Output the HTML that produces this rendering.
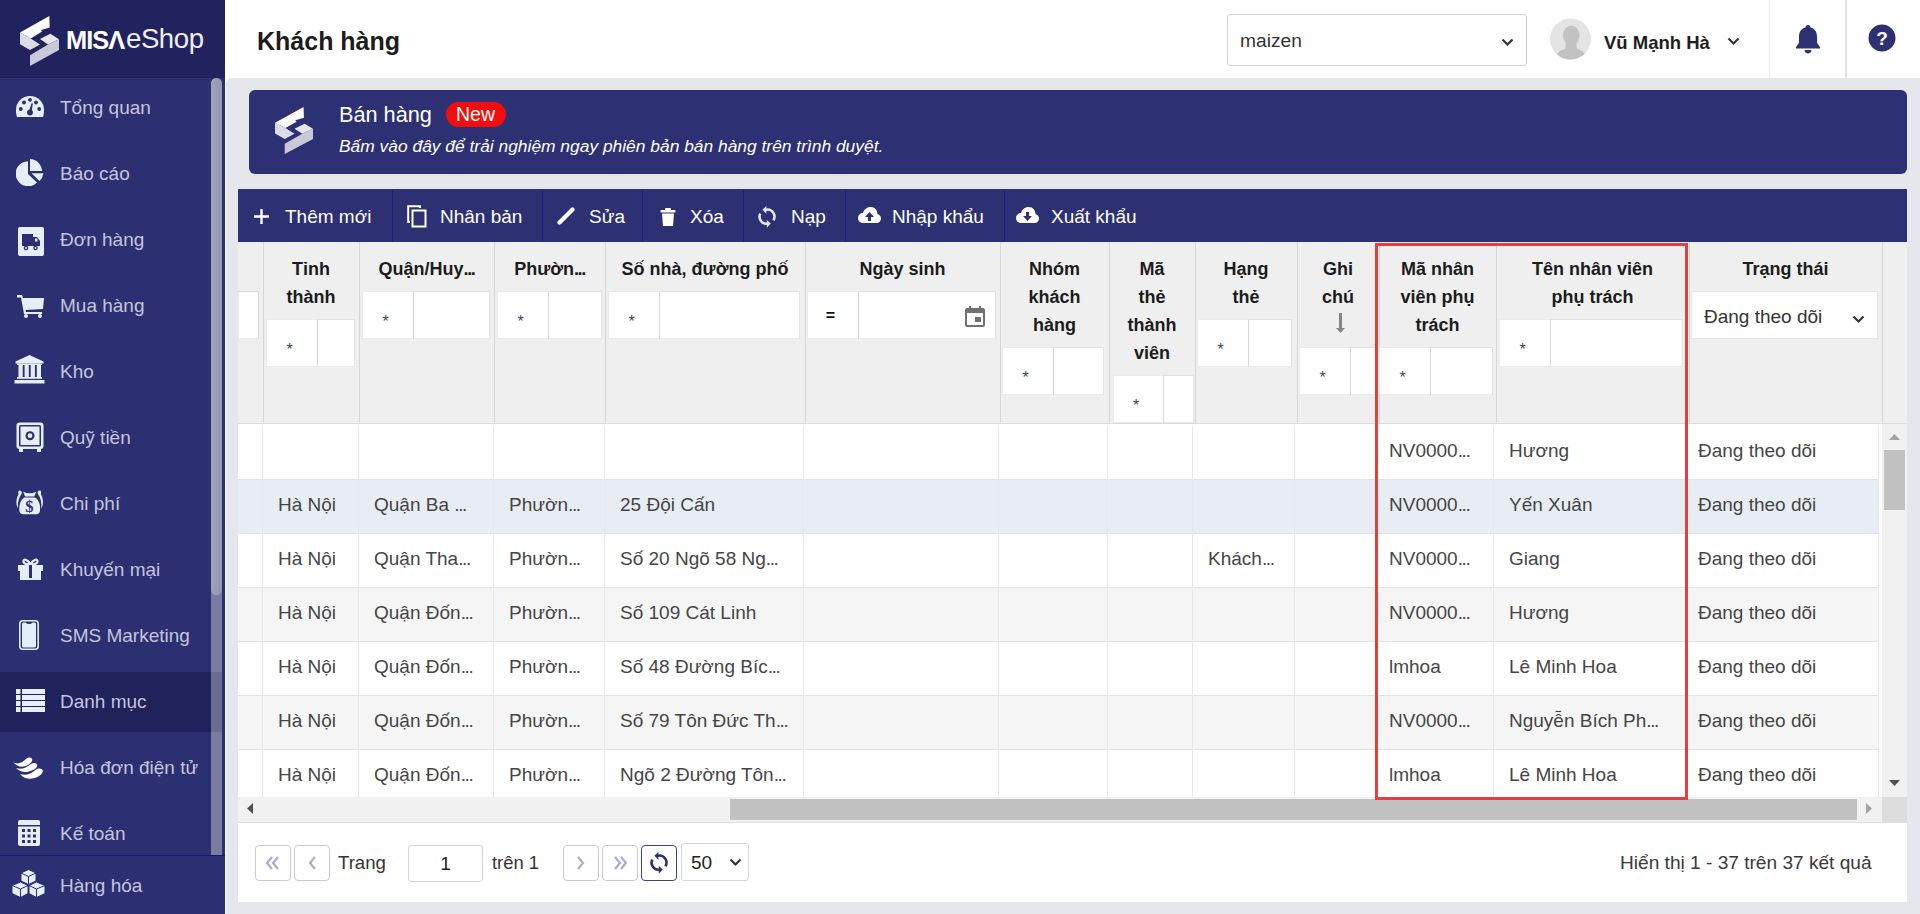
<!DOCTYPE html>
<html><head><meta charset="utf-8">
<style>
*{box-sizing:border-box;margin:0;padding:0}
html,body{width:1920px;height:914px;overflow:hidden;background:#e6e7ec;font-family:"Liberation Sans",sans-serif;position:relative}
.a{position:absolute}
.tx{position:absolute;white-space:nowrap;line-height:20px;height:20px}
#side{left:0;top:0;width:225px;height:914px;background:#2c2f72}
#logo{left:0;top:0;width:225px;height:78px;background:#21235e}
.mt{position:absolute;left:60px;color:#c4c5dd;font-size:19px;white-space:nowrap;line-height:20px;height:20px}
.ic{position:absolute}
#header{left:225px;top:0;width:1695px;height:78px;background:#fff}
#banner{left:249px;top:90px;width:1658px;height:84px;background:#2d3072;border-radius:6px}
#toolbar{left:238px;top:189px;width:1669px;height:53px;background:#2d3072}
.sep{position:absolute;top:190px;width:1px;height:52px;background:#1f1b8c}
.tbt{position:absolute;color:#fff;font-size:19px;white-space:nowrap;line-height:20px;top:207px}
.hd{position:absolute;text-align:center;font-weight:bold;font-size:18px;line-height:28px;height:28px;color:#1c1c1c;white-space:nowrap}
.op{position:absolute;text-align:center;font-size:16px;line-height:16px;color:#3c4260}
.bd{position:absolute;white-space:nowrap;font-size:19px;line-height:20px;height:20px;color:#454545}
.el{letter-spacing:-1.4px}
</style></head><body>
<!-- SIDEBAR -->
<div id="side" class="a"></div>
<div id="logo" class="a"></div>
<svg class="a" style="left:20px;top:16px" width="39" height="50" viewBox="80 68 585 782" preserveAspectRatio="none">
 <polygon fill="#ffffff" points="80,328 520,68 525,248 392,290 412,312 240,418"/>
 <polygon fill="#dcdce8" points="80,328 240,418 380,512 230,600 80,510"/>
 <polygon fill="#e6e6ef" points="380,428 535,345 665,430 500,512"/>
 <polygon fill="#c9c9da" points="500,512 665,430 665,600 230,850 230,680"/>
</svg>
<div class="tx" style="left:66px;top:29px;font-size:25.4px;line-height:22px;height:22px;font-weight:bold;color:#fff;letter-spacing:-1px">MISΛ</div>
<div class="tx" style="left:126px;top:26px;font-size:27.6px;line-height:26px;height:26px;color:#eeeef5;letter-spacing:-0.45px">eShop</div>

<!-- sidebar scrollbar -->
<div class="a" style="left:211px;top:78px;width:11px;height:778px;background:#7a7ba3;border-radius:6px 6px 0 0"></div>
<div class="a" style="left:211px;top:78px;width:11px;height:517px;background:linear-gradient(90deg,#a0a1ba,#9495ae);border-radius:6px"></div>
<!-- active band -->
<div class="a" style="left:0;top:672px;width:211px;height:60px;background:#1f225b"></div>
<div class="a" style="left:211px;top:672px;width:11px;height:60px;background:#6b6c92"></div>
<!-- separator -->
<div class="a" style="left:0;top:855px;width:225px;height:1px;background:#17137a"></div>

<!-- menu icons -->
<!-- gauge -->
<svg class="ic" style="left:16px;top:96px" width="28" height="22" viewBox="0 0 28 22">
 <path fill="#e6eefa" d="M1,21 C0,18 0,16 0,14 A14,14 0 0 1 28,14 C28,16 28,18 27,21 Z"/>
 <g fill="#2c2f72"><circle cx="4.8" cy="13" r="1.9"/><circle cx="8" cy="6.5" r="1.9"/><circle cx="14" cy="3.8" r="1.9"/><circle cx="20" cy="6.5" r="1.9"/><circle cx="23.2" cy="13" r="1.9"/>
 <circle cx="14" cy="16.5" r="2.9"/><path d="M12.6,16 L15.6,7.2 L16.9,7.6 L15.4,16.8Z"/></g>
</svg>
<!-- pie -->
<svg class="ic" style="left:16px;top:159px" width="28" height="27" viewBox="0 0 28 27">
 <path fill="#e6eefa" d="M12,2.2 L12,15 L21,23.5 A12.5,12.5 0 1 1 12,2.2Z"/>
 <path fill="#e6eefa" d="M14,0 A12.5,12.5 0 0 1 26,12 L14,12Z"/>
 <path fill="#e6eefa" d="M15.5,14.2 L27.4,14.2 A12.5,12.5 0 0 1 23.5,22Z"/>
</svg>
<!-- truck box -->
<svg class="ic" style="left:18px;top:227px" width="26" height="29" viewBox="0 0 26 29">
 <rect x="0" y="0" width="26" height="29" rx="2" fill="#e6eefa"/>
 <g fill="#2c2f72"><rect x="4" y="7" width="11" height="12"/><path d="M15,10 L19,10 L22,14 L22,19 L15,19Z"/><circle cx="8" cy="21" r="2.3"/><circle cx="17.5" cy="21" r="2.3"/></g>
 <g fill="#e6eefa"><circle cx="8" cy="21" r="1"/><circle cx="17.5" cy="21" r="1"/><rect x="17" y="11.5" width="2.5" height="3"/></g>
</svg>
<!-- cart -->
<svg class="ic" style="left:17px;top:295px" width="27" height="23" viewBox="0 0 27 23">
 <path fill="#e6eefa" d="M0,0 L5,0 L6,3 L27,3 L26,14 L8.5,15 L9,17 L25,17 L25,19 L7,19 L4,2.5 L0,2.5Z"/>
 <circle cx="9" cy="21" r="2" fill="#e6eefa"/><circle cx="23" cy="21" r="2" fill="#e6eefa"/>
</svg>
<!-- bank -->
<svg class="ic" style="left:14px;top:355px" width="31" height="29" viewBox="0 0 31 29">
 <path fill="#e6eefa" d="M15.5,0 L29.5,6.5 L29.5,8.5 L1.5,8.5 L1.5,6.5Z"/>
 <rect x="3" y="8.5" width="25" height="1.5" fill="#e6eefa"/>
 <rect x="4.5" y="10" width="4.2" height="12" fill="#e6eefa"/><rect x="10.6" y="10" width="4.2" height="12" fill="#e6eefa"/><rect x="16.7" y="10" width="4.2" height="12" fill="#e6eefa"/><rect x="22.8" y="10" width="4.2" height="12" fill="#e6eefa"/>
 <rect x="3" y="22" width="25" height="1.8" fill="#e6eefa"/><rect x="0.5" y="25" width="30" height="3.5" fill="#e6eefa"/>
</svg>
<!-- safe -->
<svg class="ic" style="left:16px;top:422px" width="28" height="30" viewBox="0 0 28 30">
 <rect x="0.5" y="0.5" width="27" height="26.5" rx="3" fill="#e6eefa"/>
 <rect x="3" y="3" width="22" height="21.5" rx="1.5" fill="#2c2f72"/>
 <rect x="4.5" y="4.5" width="19" height="18.5" fill="#e6eefa"/>
 <circle cx="14" cy="13.7" r="4.5" fill="#2c2f72"/><circle cx="14" cy="13.7" r="2.4" fill="#e6eefa"/>
 <rect x="3" y="27" width="4" height="3" fill="#e6eefa"/><rect x="21" y="27" width="4" height="3" fill="#e6eefa"/>
</svg>
<!-- money bag -->
<svg class="ic" style="left:16px;top:490px" width="28" height="25" viewBox="0 0 28 25">
 <g fill="#e6eefa">
 <path d="M8.4,7.6 C3.5,10.5 2.8,17.5 3.6,21.5 Q4.2,24.3 7.2,24.3 L20.2,24.3 Q23.2,24.3 23.8,21.5 C24.6,17.5 23.9,10.5 19,7.6Z"/>
 <path d="M7.2,1.8 Q13.7,4.8 20.2,1.8 L18.3,6.6 L9.1,6.6Z"/>
 <path d="M3.6,0.6 C5.4,0.6 6.3,2.3 5.6,3.8 C2.6,8 1.6,13 2,18.5 C-0.2,14.5 -0.2,8.5 2.6,4.2 C1.8,2.6 2.3,0.6 3.6,0.6Z"/>
 <path transform="translate(27.4,0) scale(-1,1)" d="M3.6,0.6 C5.4,0.6 6.3,2.3 5.6,3.8 C2.6,8 1.6,13 2,18.5 C-0.2,14.5 -0.2,8.5 2.6,4.2 C1.8,2.6 2.3,0.6 3.6,0.6Z"/>
 </g>
 <text x="13.4" y="21.8" font-family="Liberation Serif" font-size="16.5" font-weight="bold" text-anchor="middle" fill="#2c2f72">$</text>
</svg>
<!-- gift -->
<svg class="ic" style="left:18px;top:558px" width="25" height="22" viewBox="0 0 25 22">
 <path fill="none" stroke="#e6eefa" stroke-width="2.2" d="M12.5,6.5 C10,1.5 6,0.5 5.5,3 C5,5.5 9,6.5 12.5,6.5 C16,6.5 20,5.5 19.5,3 C19,0.5 15,1.5 12.5,6.5"/>
 <rect x="0" y="7" width="25" height="6" fill="#e6eefa"/><rect x="2" y="13" width="21" height="9" fill="#e6eefa"/>
 <rect x="11" y="7" width="3" height="13" fill="#2c2f72"/>
</svg>
<!-- phone -->
<svg class="ic" style="left:19px;top:620px" width="20" height="30" viewBox="0 0 20 30">
 <rect x="0.8" y="0.8" width="18.4" height="28.4" rx="3" fill="none" stroke="#e6eefa" stroke-width="1.6"/>
 <path d="M3,4 Q3,2.5 4.5,2.5 L6.5,2.5 Q7.5,4 10,4 Q12.5,4 13.5,2.5 L15.5,2.5 Q17,2.5 17,4 L17,26 Q17,27.5 15.5,27.5 L4.5,27.5 Q3,27.5 3,26Z" fill="#e3eefb"/>
</svg>
<!-- list -->
<svg class="ic" style="left:16px;top:689px" width="29" height="23" viewBox="0 0 29 23">
 <g fill="#e6eefa"><rect x="0" y="0" width="4.5" height="5"/><rect x="6" y="0" width="23" height="5"/>
 <rect x="0" y="6" width="4.5" height="5"/><rect x="6" y="6" width="23" height="5"/>
 <rect x="0" y="12" width="4.5" height="5"/><rect x="6" y="12" width="23" height="5"/>
 <rect x="0" y="18" width="4.5" height="5"/><rect x="6" y="18" width="23" height="5"/></g>
</svg>
<!-- swoosh -->
<svg class="ic" style="left:13px;top:757px" width="31" height="24" viewBox="0 0 31 24">
 <g fill="#ffffff">
 <path d="M0,5 C4,8 9,6 13,2 C15,0 18,0 19,2 C20,4 18,6 15,8 C10,11 4,10 0,5Z"/>
 <path d="M3,11 C8,13 13,11 18,7 C20,5.5 23,5.5 24,7.5 C25,9.5 23,11.5 20,13 C14,16 8,16 3,11Z"/>
 <path d="M7,17 C12,19 18,17 23,12.5 C25,11 28,11 29.5,13 C30.5,15 29,17 26,19 C20,23 12,23 7,17Z"/>
 </g>
</svg>
<!-- calculator -->
<svg class="ic" style="left:18px;top:820px" width="22" height="26" viewBox="0 0 22 26">
 <rect x="0" y="0" width="22" height="26" rx="2" fill="#e6eefa"/>
 <rect x="0" y="5" width="22" height="1.5" fill="#2c2f72"/>
 <g fill="#2c2f72"><rect x="4" y="9" width="3" height="3"/><rect x="9.5" y="9" width="3" height="3"/><rect x="15" y="9" width="3" height="3"/>
 <rect x="4" y="14.5" width="3" height="3"/><rect x="9.5" y="14.5" width="3" height="3"/><rect x="15" y="14.5" width="3" height="3"/>
 <rect x="4" y="20" width="3" height="3"/><rect x="9.5" y="20" width="3" height="3"/><rect x="15" y="20" width="3" height="3"/></g>
</svg>
<!-- cubes -->
<svg class="ic" style="left:11px;top:869px" width="35" height="29" viewBox="0 0 35 29">
 <g fill="#e6eefa" stroke="#2c2f72" stroke-width="1">
 <path d="M17.5,0.5 L25,4 L25,12 L17.5,15.5 L10,12 L10,4Z"/>
 <path d="M9.5,13 L17,16.5 L17,24.5 L9.5,28.5 L1,24.5 L1,16.5Z"/>
 <path d="M25.5,13 L34,16.5 L34,24.5 L25.5,28.5 L18,24.5 L18,16.5Z"/>
 </g>
 <g fill="none" stroke="#2c2f72" stroke-width="1"><path d="M10,4 L17.5,7.5 L25,4 M17.5,7.5 L17.5,15.5 M1,16.5 L9.5,20 L17,16.5 M9.5,20 L9.5,28.5 M18,16.5 L25.5,20 L34,16.5 M25.5,20 L25.5,28.5"/></g>
</svg>

<div class="mt" style="top:98px">Tổng quan</div>
<div class="mt" style="top:164px">Báo cáo</div>
<div class="mt" style="top:230px">Đơn hàng</div>
<div class="mt" style="top:296px">Mua hàng</div>
<div class="mt" style="top:362px">Kho</div>
<div class="mt" style="top:428px">Quỹ tiền</div>
<div class="mt" style="top:494px">Chi phí</div>
<div class="mt" style="top:560px">Khuyến mại</div>
<div class="mt" style="top:626px">SMS Marketing</div>
<div class="mt" style="top:692px">Danh mục</div>
<div class="mt" style="top:758px">Hóa đơn điện tử</div>
<div class="mt" style="top:824px">Kế toán</div>
<div class="mt" style="top:876px">Hàng hóa</div>

<!-- HEADER -->
<div id="header" class="a"></div>
<div class="a" style="left:225px;top:78px;width:8px;height:8px;background:#fff"></div>
<div class="a" style="left:226px;top:78px;width:16px;height:16px;background:#e6e7ec;border-radius:6px 0 0 0"></div>
<div class="a" style="left:225px;top:78px;width:1px;height:836px;background:#fff"></div>
<div class="tx" style="left:257px;top:26px;font-size:25px;line-height:30px;height:30px;font-weight:bold;color:#1c1c1c">Khách hàng</div>

<!-- BANNER -->
<div id="banner" class="a"></div>
<!-- TOOLBAR -->
<div id="toolbar" class="a"></div>

<!-- header right -->
<div class="a" style="left:1227px;top:14px;width:300px;height:52px;border:1px solid #d4d4d4;border-radius:3px;background:#fff"></div>
<div class="tx" style="left:1240px;top:31px;font-size:19.2px;color:#333">maizen</div>
<svg class="a" style="left:1501px;top:38px" width="13" height="9" viewBox="0 0 13 9"><path d="M1.5,1.5 L6.5,6.5 L11.5,1.5" fill="none" stroke="#333" stroke-width="2.2"/></svg>
<svg class="a" style="left:1549px;top:18px" width="42" height="42" viewBox="0 0 42 42">
 <circle cx="21.5" cy="21" r="20.5" fill="#e4e4e4"/>
 <clipPath id="avc"><circle cx="21.5" cy="21" r="20.5"/></clipPath>
 <g clip-path="url(#avc)" fill="#c2c2c2"><ellipse cx="22.3" cy="17.5" rx="8.3" ry="10"/><path d="M17,24 L27,24 L28,31 C33,32 37,35 38,42 L6,42 C7,35 11,32 16,31Z"/></g>
</svg>
<div class="tx" style="left:1604px;top:33px;font-size:18.5px;font-weight:bold;color:#1e1e1e">Vũ Mạnh Hà</div>
<svg class="a" style="left:1727px;top:37px" width="13" height="9" viewBox="0 0 13 9"><path d="M1.5,1.5 L6.5,6.5 L11.5,1.5" fill="none" stroke="#333" stroke-width="2.2"/></svg>
<div class="a" style="left:1769px;top:0;width:1px;height:78px;background:#ececec"></div>
<div class="a" style="left:1845px;top:0;width:2px;height:78px;background:#e2e2e2"></div>
<svg class="a" style="left:1795px;top:25px" width="26" height="29" viewBox="0 0 26 29">
 <path fill="#2d3072" d="M13,0 C14.5,0 15.5,1 15.5,2.5 C20,3.5 22,7 22,12 L22,18 L25,22 L25,23.5 L1,23.5 L1,22 L4,18 L4,12 C4,7 6,3.5 10.5,2.5 C10.5,1 11.5,0 13,0Z"/>
 <path fill="#2d3072" d="M9.5,25 L16.5,25 C16.5,27 15,28.5 13,28.5 C11,28.5 9.5,27 9.5,25Z"/>
</svg>
<svg class="a" style="left:1868px;top:24px" width="28" height="28" viewBox="0 0 28 28">
 <circle cx="14" cy="14" r="13.5" fill="#2d3072"/>
 <text x="14" y="21" font-family="Liberation Sans" font-weight="bold" font-size="19" fill="#fff" text-anchor="middle">?</text>
</svg>

<!-- banner content -->
<svg class="a" style="left:275px;top:107px" width="38" height="47" viewBox="80 68 585 782" preserveAspectRatio="none">
 <polygon fill="#ffffff" points="80,328 520,68 525,248 392,290 412,312 240,418"/>
 <polygon fill="#dcdce8" points="80,328 240,418 380,512 230,600 80,510"/>
 <polygon fill="#e6e6ef" points="380,428 535,345 665,430 500,512"/>
 <polygon fill="#c9c9da" points="500,512 665,430 665,600 230,850 230,680"/>
</svg>
<div class="tx" style="left:339px;top:102px;font-size:21.7px;line-height:26px;height:26px;color:#fff">Bán hàng</div>
<div class="a" style="left:446px;top:102px;width:60px;height:25px;background:#f50d0d;border-radius:13px"></div>
<div class="tx" style="left:456px;top:104px;font-size:19.5px;line-height:21px;color:#fff">New</div>
<div class="tx" style="left:339px;top:136px;font-size:17.4px;line-height:20px;color:#fff;font-style:italic">Bấm vào đây để trải nghiệm ngay phiên bản bán hàng trên trình duyệt.</div>

<!-- toolbar content -->
<svg class="a" style="left:254px;top:209px" width="15" height="15" viewBox="0 0 15 15"><path d="M7.5,0 L7.5,15 M0,7.5 L15,7.5" stroke="#fff" stroke-width="2.4"/></svg>
<div class="tbt" style="left:285px">Thêm mới</div>
<div class="sep" style="left:392px"></div>
<svg class="a" style="left:407px;top:205px" width="21" height="23" viewBox="0 0 21 23">
 <path d="M3,17 L1.2,17 L1.2,1.2 L13,1.2 L13,3" fill="none" stroke="#fff" stroke-width="2"/>
 <rect x="5.5" y="5.5" width="13" height="16" fill="none" stroke="#fff" stroke-width="2"/>
</svg>
<div class="tbt" style="left:440px">Nhân bản</div>
<div class="sep" style="left:542px"></div>
<svg class="a" style="left:557px;top:206px" width="19" height="19" viewBox="0 0 19 19"><path d="M2.5,16.5 L15.5,3.5" stroke="#fff" stroke-width="4.2" stroke-linecap="round"/><path d="M0.8,18.2 L1.8,14.5 L4.5,17.2Z" fill="#fff"/></svg>
<div class="tbt" style="left:589px">Sửa</div>
<div class="sep" style="left:642px"></div>
<svg class="a" style="left:660px;top:208px" width="16" height="18" viewBox="0 0 16 18"><rect x="0.5" y="2" width="15" height="2.5" rx="0.8" fill="#fff"/><rect x="5" y="0" width="6" height="2.5" rx="1" fill="#fff"/><path fill="#fff" d="M2,5.5 L14,5.5 L13,18 L3,18Z"/></svg>
<div class="tbt" style="left:690px">Xóa</div>
<div class="sep" style="left:743px"></div>
<svg class="a" style="left:756px;top:204px" width="22" height="26" viewBox="0 0 22 26"><path d="M9.9,5.7 A7,7 0 0 1 17.4,16.2 M4.3,9.6 A7,7 0 0 0 11.3,19.7" fill="none" stroke="#e4e5f0" stroke-width="2.6"/><path d="M6.4,5.8 L10.4,1.9 L10.4,9.7Z M14.8,19.6 L10.8,16.1 L10.8,23.7Z" fill="#e4e5f0"/></svg>
<div class="tbt" style="left:791px">Nạp</div>
<div class="sep" style="left:845px"></div>
<svg class="a" style="left:858px;top:207px" width="23" height="17" viewBox="0 0 23 17">
 <path fill="#fff" d="M5,16 C2,16 0,13.5 0,11 C0,8 2.5,6 5,6 C6,2.5 9,0 12.5,0 C17,0 19.5,3.5 19.5,7 C21.5,7.5 23,9.5 23,11.5 C23,14 21,16 18.5,16Z"/>
 <path fill="#2d3072" d="M11.5,5 L16,10 L13,10 L13,14 L10,14 L10,10 L7,10Z"/>
</svg>
<div class="tbt" style="left:892px">Nhập khẩu</div>
<div class="sep" style="left:1004px"></div>
<svg class="a" style="left:1016px;top:207px" width="23" height="17" viewBox="0 0 23 17">
 <path fill="#fff" d="M5,16 C2,16 0,13.5 0,11 C0,8 2.5,6 5,6 C6,2.5 9,0 12.5,0 C17,0 19.5,3.5 19.5,7 C21.5,7.5 23,9.5 23,11.5 C23,14 21,16 18.5,16Z"/>
 <path fill="#2d3072" d="M11.5,14 L16,9 L13,9 L13,5 L10,5 L10,9 L7,9Z"/>
</svg>
<div class="tbt" style="left:1051px">Xuất khẩu</div>
<!--TABLEBEGIN-->
<div class="a" style="left:238px;top:242px;width:1669px;height:182px;background:#efefef"></div>
<div class="a" style="left:238px;top:423px;width:1669px;height:1px;background:#dadada"></div>
<div class="a" style="left:263px;top:242px;width:1px;height:182px;background:#d6d6d6"></div>
<div class="a" style="left:359px;top:242px;width:1px;height:182px;background:#d6d6d6"></div>
<div class="a" style="left:494px;top:242px;width:1px;height:182px;background:#d6d6d6"></div>
<div class="a" style="left:605px;top:242px;width:1px;height:182px;background:#d6d6d6"></div>
<div class="a" style="left:805px;top:242px;width:1px;height:182px;background:#d6d6d6"></div>
<div class="a" style="left:1000px;top:242px;width:1px;height:182px;background:#d6d6d6"></div>
<div class="a" style="left:1109px;top:242px;width:1px;height:182px;background:#d6d6d6"></div>
<div class="a" style="left:1195px;top:242px;width:1px;height:182px;background:#d6d6d6"></div>
<div class="a" style="left:1297px;top:242px;width:1px;height:182px;background:#d6d6d6"></div>
<div class="a" style="left:1379px;top:242px;width:1px;height:182px;background:#d6d6d6"></div>
<div class="a" style="left:1496px;top:242px;width:1px;height:182px;background:#d6d6d6"></div>
<div class="a" style="left:1689px;top:242px;width:1px;height:182px;background:#d6d6d6"></div>
<div class="a" style="left:1882px;top:242px;width:1px;height:182px;background:#d6d6d6"></div>
<div class="hd" style="left:263px;width:96px;top:255px">Tỉnh</div>
<div class="hd" style="left:263px;width:96px;top:283px">thành</div>
<div class="hd" style="left:359px;width:135px;top:255px">Quận/Huy<span class="el">...</span></div>
<div class="hd" style="left:494px;width:111px;top:255px">Phườn<span class="el">...</span></div>
<div class="hd" style="left:605px;width:200px;top:255px">Số nhà, đường phố</div>
<div class="hd" style="left:805px;width:195px;top:255px">Ngày sinh</div>
<div class="hd" style="left:1000px;width:109px;top:255px">Nhóm</div>
<div class="hd" style="left:1000px;width:109px;top:283px">khách</div>
<div class="hd" style="left:1000px;width:109px;top:311px">hàng</div>
<div class="hd" style="left:1109px;width:86px;top:255px">Mã</div>
<div class="hd" style="left:1109px;width:86px;top:283px">thẻ</div>
<div class="hd" style="left:1109px;width:86px;top:311px">thành</div>
<div class="hd" style="left:1109px;width:86px;top:339px">viên</div>
<div class="hd" style="left:1195px;width:102px;top:255px">Hạng</div>
<div class="hd" style="left:1195px;width:102px;top:283px">thẻ</div>
<div class="hd" style="left:1297px;width:82px;top:255px">Ghi</div>
<div class="hd" style="left:1297px;width:82px;top:283px">chú</div>
<div class="hd" style="left:1379px;width:117px;top:255px">Mã nhân</div>
<div class="hd" style="left:1379px;width:117px;top:283px">viên phụ</div>
<div class="hd" style="left:1379px;width:117px;top:311px">trách</div>
<div class="hd" style="left:1496px;width:193px;top:255px">Tên nhân viên</div>
<div class="hd" style="left:1496px;width:193px;top:283px">phụ trách</div>
<div class="hd" style="left:1689px;width:193px;top:255px">Trạng thái</div>
<div class="a" style="left:238px;top:291px;width:21px;height:48px;background:#fff;border:1px solid #ebebeb"></div>
<div class="a" style="left:238px;top:291px;width:21px;height:48px;border-top:1px solid #d6d6d6;border-right:1px solid #dadada"></div>
<div class="a" style="left:266px;top:319px;width:89px;height:48px;background:#fff;border:1px solid #ebebeb"></div>
<div class="a" style="left:317px;top:319px;width:38px;height:48px;border-top:1px solid #e2e2e2;border-left:1px solid #d8d8d8;border-right:1px solid #e2e2e2"></div>
<div class="op" style="left:264px;width:51px;top:342px;">*</div>
<div class="a" style="left:362px;top:291px;width:128px;height:48px;background:#fff;border:1px solid #ebebeb"></div>
<div class="a" style="left:413px;top:291px;width:77px;height:48px;border-top:1px solid #e2e2e2;border-left:1px solid #d8d8d8;border-right:1px solid #e2e2e2"></div>
<div class="op" style="left:360px;width:51px;top:314px;">*</div>
<div class="a" style="left:497px;top:291px;width:105px;height:48px;background:#fff;border:1px solid #ebebeb"></div>
<div class="a" style="left:548px;top:291px;width:54px;height:48px;border-top:1px solid #e2e2e2;border-left:1px solid #d8d8d8;border-right:1px solid #e2e2e2"></div>
<div class="op" style="left:495px;width:51px;top:314px;">*</div>
<div class="a" style="left:608px;top:291px;width:192px;height:48px;background:#fff;border:1px solid #ebebeb"></div>
<div class="a" style="left:659px;top:291px;width:141px;height:48px;border-top:1px solid #e2e2e2;border-left:1px solid #d8d8d8;border-right:1px solid #e2e2e2"></div>
<div class="op" style="left:606px;width:51px;top:314px;">*</div>
<div class="a" style="left:807px;top:291px;width:189px;height:48px;background:#fff;border:1px solid #ebebeb"></div>
<div class="a" style="left:858px;top:291px;width:138px;height:48px;border-top:1px solid #e2e2e2;border-left:1px solid #d8d8d8;border-right:1px solid #e2e2e2"></div>
<div class="op" style="left:805px;width:51px;top:308px;font-weight:bold;color:#111;">=</div>
<div class="a" style="left:1002px;top:347px;width:102px;height:48px;background:#fff;border:1px solid #ebebeb"></div>
<div class="a" style="left:1053px;top:347px;width:51px;height:48px;border-top:1px solid #e2e2e2;border-left:1px solid #d8d8d8;border-right:1px solid #e2e2e2"></div>
<div class="op" style="left:1000px;width:51px;top:370px;">*</div>
<div class="a" style="left:1113px;top:375px;width:81px;height:48px;background:#fff;border:1px solid #ebebeb"></div>
<div class="a" style="left:1163px;top:375px;width:31px;height:48px;border-top:1px solid #e2e2e2;border-left:1px solid #d8d8d8;border-right:1px solid #e2e2e2"></div>
<div class="op" style="left:1111px;width:50px;top:398px;">*</div>
<div class="a" style="left:1197px;top:319px;width:95px;height:48px;background:#fff;border:1px solid #ebebeb"></div>
<div class="a" style="left:1248px;top:319px;width:44px;height:48px;border-top:1px solid #e2e2e2;border-left:1px solid #d8d8d8;border-right:1px solid #e2e2e2"></div>
<div class="op" style="left:1195px;width:51px;top:342px;">*</div>
<div class="a" style="left:1299px;top:347px;width:79px;height:48px;background:#fff;border:1px solid #ebebeb"></div>
<div class="a" style="left:1350px;top:347px;width:28px;height:48px;border-top:1px solid #e2e2e2;border-left:1px solid #d8d8d8;border-right:1px solid #e2e2e2"></div>
<div class="op" style="left:1297px;width:51px;top:370px;">*</div>
<div class="a" style="left:1379px;top:347px;width:114px;height:48px;background:#fff;border:1px solid #ebebeb"></div>
<div class="a" style="left:1430px;top:347px;width:63px;height:48px;border-top:1px solid #e2e2e2;border-left:1px solid #d8d8d8;border-right:1px solid #e2e2e2"></div>
<div class="op" style="left:1377px;width:51px;top:370px;">*</div>
<div class="a" style="left:1499px;top:319px;width:184px;height:48px;background:#fff;border:1px solid #ebebeb"></div>
<div class="a" style="left:1550px;top:319px;width:133px;height:48px;border-top:1px solid #e2e2e2;border-left:1px solid #d8d8d8;border-right:1px solid #e2e2e2"></div>
<div class="op" style="left:1497px;width:51px;top:342px;">*</div>
<svg class="a" style="left:1335px;top:312px" width="12" height="22" viewBox="0 0 12 22"><rect x="4" y="1" width="3" height="16" fill="#858585"/><path d="M1,16 L10,16 L5.5,21Z" fill="#858585"/></svg>
<svg class="a" style="left:965px;top:306px" width="20" height="21" viewBox="0 0 20 21"><path fill="#707070" d="M4,0 L6,0 L6,2 L14,2 L14,0 L16,0 L16,2 L18,2 C19,2 20,3 20,4 L20,19 C20,20 19,21 18,21 L2,21 C1,21 0,20 0,19 L0,4 C0,3 1,2 2,2 L4,2Z M2,7 L2,19 L18,19 L18,7Z M10,11 L16,11 L16,16 L10,16Z"/></svg>
<div class="a" style="left:1691px;top:291px;width:187px;height:48px;background:#fff;border:1px solid #e6e6e6"></div>
<div class="tx" style="left:1704px;top:307px;font-size:19px;color:#333">Đang theo dõi</div>
<svg class="a" style="left:1852px;top:315px" width="13" height="9" viewBox="0 0 13 9"><path d="M1.5,1.5 L6.5,6.5 L11.5,1.5" fill="none" stroke="#333" stroke-width="2.2"/></svg>
<div class="a" style="left:238px;top:424px;width:1669px;height:373px;background:#fff"></div>
<div class="a" style="left:238px;top:425px;width:1641px;height:54px;background:#ffffff"></div>
<div class="a" style="left:238px;top:479px;width:1641px;height:1px;background:#e3e3e3"></div>
<div class="a" style="left:238px;top:480px;width:1641px;height:53px;background:#e8edf3"></div>
<div class="a" style="left:238px;top:533px;width:1641px;height:1px;background:#e3e3e3"></div>
<div class="a" style="left:238px;top:534px;width:1641px;height:53px;background:#ffffff"></div>
<div class="a" style="left:238px;top:587px;width:1641px;height:1px;background:#e3e3e3"></div>
<div class="a" style="left:238px;top:588px;width:1641px;height:53px;background:#f5f5f5"></div>
<div class="a" style="left:238px;top:641px;width:1641px;height:1px;background:#e3e3e3"></div>
<div class="a" style="left:238px;top:642px;width:1641px;height:53px;background:#ffffff"></div>
<div class="a" style="left:238px;top:695px;width:1641px;height:1px;background:#e3e3e3"></div>
<div class="a" style="left:238px;top:696px;width:1641px;height:53px;background:#f5f5f5"></div>
<div class="a" style="left:238px;top:749px;width:1641px;height:1px;background:#e3e3e3"></div>
<div class="a" style="left:238px;top:750px;width:1641px;height:47px;background:#ffffff"></div>
<div class="a" style="left:262px;top:426px;width:1px;height:371px;background:#e8e8e8"></div>
<div class="a" style="left:358px;top:426px;width:1px;height:371px;background:#e8e8e8"></div>
<div class="a" style="left:493px;top:426px;width:1px;height:371px;background:#e8e8e8"></div>
<div class="a" style="left:604px;top:426px;width:1px;height:371px;background:#e8e8e8"></div>
<div class="a" style="left:803px;top:426px;width:1px;height:371px;background:#e8e8e8"></div>
<div class="a" style="left:998px;top:426px;width:1px;height:371px;background:#e8e8e8"></div>
<div class="a" style="left:1107px;top:426px;width:1px;height:371px;background:#e8e8e8"></div>
<div class="a" style="left:1192px;top:426px;width:1px;height:371px;background:#e8e8e8"></div>
<div class="a" style="left:1294px;top:426px;width:1px;height:371px;background:#e8e8e8"></div>
<div class="a" style="left:1376px;top:426px;width:1px;height:371px;background:#e8e8e8"></div>
<div class="a" style="left:1493px;top:426px;width:1px;height:371px;background:#e8e8e8"></div>
<div class="a" style="left:1686px;top:426px;width:1px;height:371px;background:#e8e8e8"></div>
<div class="a" style="left:1878px;top:426px;width:1px;height:371px;background:#e8e8e8"></div>
<div class="bd" style="left:1389px;top:441px">NV0000<span class="el">...</span></div>
<div class="bd" style="left:1509px;top:441px">Hương</div>
<div class="bd" style="left:1698px;top:441px">Đang theo dõi</div>
<div class="bd" style="left:278px;top:495px">Hà Nội</div>
<div class="bd" style="left:374px;top:495px">Quận Ba <span class="el">...</span></div>
<div class="bd" style="left:509px;top:495px">Phườn<span class="el">...</span></div>
<div class="bd" style="left:620px;top:495px">25 Đội Cấn</div>
<div class="bd" style="left:1389px;top:495px">NV0000<span class="el">...</span></div>
<div class="bd" style="left:1509px;top:495px">Yến Xuân</div>
<div class="bd" style="left:1698px;top:495px">Đang theo dõi</div>
<div class="bd" style="left:278px;top:549px">Hà Nội</div>
<div class="bd" style="left:374px;top:549px">Quận Tha<span class="el">...</span></div>
<div class="bd" style="left:509px;top:549px">Phườn<span class="el">...</span></div>
<div class="bd" style="left:620px;top:549px">Số 20 Ngõ 58 Ng<span class="el">...</span></div>
<div class="bd" style="left:1208px;top:549px">Khách<span class="el">...</span></div>
<div class="bd" style="left:1389px;top:549px">NV0000<span class="el">...</span></div>
<div class="bd" style="left:1509px;top:549px">Giang</div>
<div class="bd" style="left:1698px;top:549px">Đang theo dõi</div>
<div class="bd" style="left:278px;top:603px">Hà Nội</div>
<div class="bd" style="left:374px;top:603px">Quận Đốn<span class="el">...</span></div>
<div class="bd" style="left:509px;top:603px">Phườn<span class="el">...</span></div>
<div class="bd" style="left:620px;top:603px">Số 109 Cát Linh</div>
<div class="bd" style="left:1389px;top:603px">NV0000<span class="el">...</span></div>
<div class="bd" style="left:1509px;top:603px">Hương</div>
<div class="bd" style="left:1698px;top:603px">Đang theo dõi</div>
<div class="bd" style="left:278px;top:657px">Hà Nội</div>
<div class="bd" style="left:374px;top:657px">Quận Đốn<span class="el">...</span></div>
<div class="bd" style="left:509px;top:657px">Phườn<span class="el">...</span></div>
<div class="bd" style="left:620px;top:657px">Số 48 Đường Bíc<span class="el">...</span></div>
<div class="bd" style="left:1389px;top:657px">lmhoa</div>
<div class="bd" style="left:1509px;top:657px">Lê Minh Hoa</div>
<div class="bd" style="left:1698px;top:657px">Đang theo dõi</div>
<div class="bd" style="left:278px;top:711px">Hà Nội</div>
<div class="bd" style="left:374px;top:711px">Quận Đốn<span class="el">...</span></div>
<div class="bd" style="left:509px;top:711px">Phườn<span class="el">...</span></div>
<div class="bd" style="left:620px;top:711px">Số 79 Tôn Đức Th<span class="el">...</span></div>
<div class="bd" style="left:1389px;top:711px">NV0000<span class="el">...</span></div>
<div class="bd" style="left:1509px;top:711px">Nguyễn Bích Ph<span class="el">...</span></div>
<div class="bd" style="left:1698px;top:711px">Đang theo dõi</div>
<div class="bd" style="left:278px;top:765px">Hà Nội</div>
<div class="bd" style="left:374px;top:765px">Quận Đốn<span class="el">...</span></div>
<div class="bd" style="left:509px;top:765px">Phườn<span class="el">...</span></div>
<div class="bd" style="left:620px;top:765px">Ngõ 2 Đường Tôn<span class="el">...</span></div>
<div class="bd" style="left:1389px;top:765px">lmhoa</div>
<div class="bd" style="left:1509px;top:765px">Lê Minh Hoa</div>
<div class="bd" style="left:1698px;top:765px">Đang theo dõi</div>
<div class="a" style="left:1882px;top:424px;width:25px;height:373px;background:#f1f1f1"></div>
<div class="a" style="left:1884px;top:450px;width:21px;height:60px;background:#c1c1c1"></div>
<svg class="a" style="left:1889px;top:434px" width="11" height="7" viewBox="0 0 11 7"><path d="M0,6 L5.5,0 L11,6Z" fill="#a3a3a3"/></svg>
<svg class="a" style="left:1889px;top:780px" width="11" height="7" viewBox="0 0 11 7"><path d="M0,0 L5.5,6 L11,0Z" fill="#505050"/></svg>
<div class="a" style="left:238px;top:797px;width:1644px;height:25px;background:#f1f1f1"></div>
<div class="a" style="left:730px;top:799px;width:1127px;height:21px;background:#c1c1c1"></div>
<svg class="a" style="left:247px;top:803px" width="7" height="11" viewBox="0 0 7 11"><path d="M6,0 L0,5.5 L6,11Z" fill="#505050"/></svg>
<svg class="a" style="left:1866px;top:803px" width="7" height="11" viewBox="0 0 7 11"><path d="M0,0 L6,5.5 L0,11Z" fill="#a3a3a3"/></svg>
<div class="a" style="left:1882px;top:797px;width:25px;height:25px;background:#dcdcdc"></div>
<div class="a" style="left:238px;top:822px;width:1669px;height:1px;background:#dedede"></div>
<div class="a" style="left:1375px;top:243px;width:313px;height:557px;border:3px solid #e2403f"></div>
<div class="a" style="left:238px;top:823px;width:1669px;height:79px;background:#fff"></div>
<div class="a" style="left:255px;top:845px;width:36px;height:36px;border:1px solid #c7c8e0;border-radius:4px;background:#fff"></div>
<div class="a" style="left:294px;top:845px;width:36px;height:36px;border:1px solid #c7c8e0;border-radius:4px;background:#fff"></div>
<div class="a" style="left:563px;top:845px;width:36px;height:36px;border:1px solid #c7c8e0;border-radius:4px;background:#fff"></div>
<div class="a" style="left:602px;top:845px;width:36px;height:36px;border:1px solid #c7c8e0;border-radius:4px;background:#fff"></div>
<div class="a" style="left:641px;top:845px;width:36px;height:36px;border:1px solid #3f4282;border-radius:4px;background:#fff"></div>
<svg class="a" style="left:265px;top:856px" width="16" height="14" viewBox="0 0 16 14"><path d="M7,1 L2,7 L7,13 M13,1 L8,7 L13,13" fill="none" stroke="#a9abd0" stroke-width="2.2"/></svg>
<svg class="a" style="left:307px;top:856px" width="10" height="14" viewBox="0 0 10 14"><path d="M8,1 L3,7 L8,13" fill="none" stroke="#a9abd0" stroke-width="2.2"/></svg>
<svg class="a" style="left:576px;top:856px" width="10" height="14" viewBox="0 0 10 14"><path d="M2,1 L7,7 L2,13" fill="none" stroke="#a9abd0" stroke-width="2.2"/></svg>
<svg class="a" style="left:612px;top:856px" width="16" height="14" viewBox="0 0 16 14"><path d="M3,1 L8,7 L3,13 M9,1 L14,7 L9,13" fill="none" stroke="#a9abd0" stroke-width="2.2"/></svg>
<svg class="a" style="left:648px;top:850px" width="22" height="26" viewBox="0 0 22 26"><path d="M9.9,5.7 A7,7 0 0 1 17.4,16.2 M4.3,9.6 A7,7 0 0 0 11.3,19.7" fill="none" stroke="#2d3072" stroke-width="2.6"/><path d="M6.4,5.8 L10.4,1.9 L10.4,9.7Z M14.8,19.6 L10.8,16.1 L10.8,23.7Z" fill="#2d3072"/></svg>
<div class="tx" style="left:338px;top:853px;font-size:18.6px;color:#333">Trang</div>
<div class="a" style="left:408px;top:845px;width:75px;height:37px;border:1px solid #d6d6d6;border-radius:3px;background:#fff"></div>
<div class="tx" style="left:408px;top:854px;width:75px;text-align:center;font-size:19px;color:#222">1</div>
<div class="tx" style="left:492px;top:853px;font-size:18.4px;color:#333">trên 1</div>
<div class="a" style="left:681px;top:843px;width:68px;height:38px;border:1px solid #d6d6d6;border-radius:3px;background:#fff"></div>
<div class="tx" style="left:691px;top:853px;font-size:19px;color:#222">50</div>
<svg class="a" style="left:729px;top:858px" width="13" height="9" viewBox="0 0 13 9"><path d="M1.5,1.5 L6.5,6.5 L11.5,1.5" fill="none" stroke="#333" stroke-width="2.2"/></svg>
<div class="tx" style="left:1620px;top:853px;font-size:19.1px;color:#3a3a3a">Hiển thị 1 - 37 trên 37 kết quả</div>
<!--TABLEEND-->
</body></html>
